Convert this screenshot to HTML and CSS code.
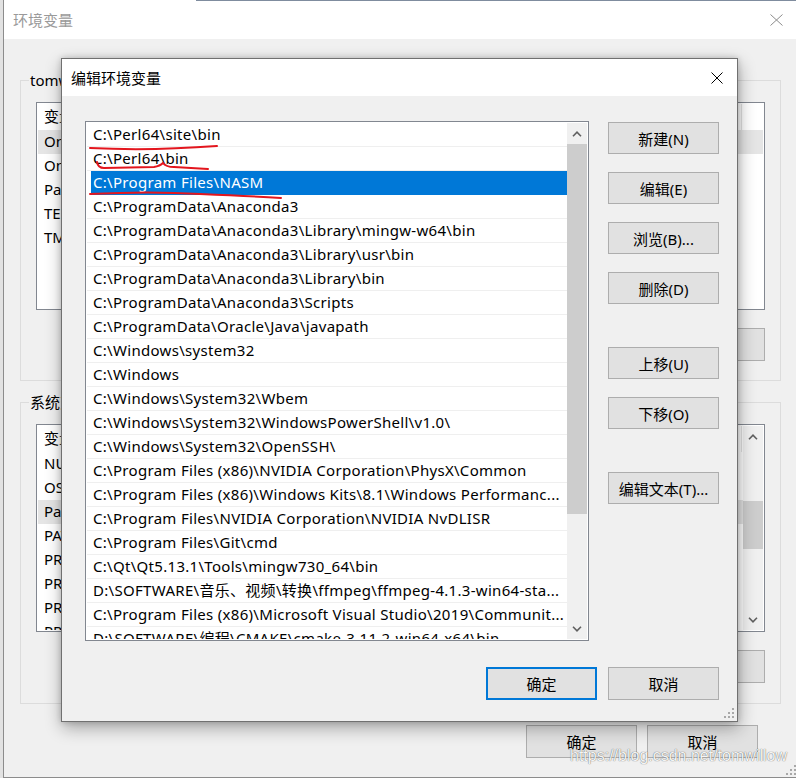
FILE: index.html
```html
<!DOCTYPE html>
<html lang="zh-CN">
<head>
<meta charset="utf-8">
<title>编辑环境变量</title>
<link rel="stylesheet" href="styles.css">
</head>
<body>
<div class="bgwin">
  <div class="bg-title">
    <span class="bg-title-text">环境变量</span>
    <svg class="bg-close" width="13" height="12" viewBox="0 0 13 12"><path d="M0.5 0.5 L12.5 11.5 M12.5 0.5 L0.5 11.5" stroke="#8c8c8c" stroke-width="1" fill="none"/></svg>
  </div>
  <div class="bg-body">
    <div class="group group-user">
      <div class="group-label">tomwillow 的用户变量(U)</div>
      <div class="lv">
        <div class="lv-inner">
          <div class="lv-head"><span class="c1">变量</span><span class="c2">值</span></div>
          <div class="lv-row lv-hl"><span class="c1">OneDrive</span><span class="c2">C:\Users\tomwillow\OneDrive</span></div>
          <div class="lv-row"><span class="c1">OneDriveConsumer</span><span class="c2">C:\Users\tomwillow\OneDrive</span></div>
          <div class="lv-row"><span class="c1">Path</span><span class="c2">C:\Users\tomwillow\AppData\Local\Microsoft\WindowsApps;</span></div>
          <div class="lv-row"><span class="c1">TEMP</span><span class="c2">C:\Users\tomwillow\AppData\Local\Temp</span></div>
          <div class="lv-row"><span class="c1">TMP</span><span class="c2">C:\Users\tomwillow\AppData\Local\Temp</span></div>
        </div>
      </div>
      <div class="btnrow">
        <div class="btn">新建(N)...</div>
        <div class="btn">编辑(E)...</div>
        <div class="btn">删除(D)</div>
      </div>
    </div>
    <div class="group group-sys">
      <div class="group-label">系统变量(S)</div>
      <div class="lv">
        <div class="lv-inner">
          <div class="lv-head"><span class="c1">变量</span><span class="c2">值</span></div>
          <div class="lv-row"><span class="c1">NUMBER_OF_PROCESSORS</span><span class="c2">8</span></div>
          <div class="lv-row"><span class="c1">OS</span><span class="c2">Windows_NT</span></div>
          <div class="lv-row lv-hl"><span class="c1">Path</span><span class="c2">C:\Perl64\site\bin;C:\Perl64\bin;C:\Program Files\NASM;</span></div>
          <div class="lv-row"><span class="c1">PATHEXT</span><span class="c2">.COM;.EXE;.BAT;.CMD;.VBS;.VBE;.JS;.JSE;.WSF;.WSH;.MSC</span></div>
          <div class="lv-row"><span class="c1">PROCESSOR_ARCHITECTURE</span><span class="c2">AMD64</span></div>
          <div class="lv-row"><span class="c1">PROCESSOR_IDENTIFIER</span><span class="c2">Intel64 Family 6 Model 158</span></div>
          <div class="lv-row"><span class="c1">PROCESSOR_LEVEL</span><span class="c2">6</span></div>
          <div class="lv-row"><span class="c1">PROCESSOR_REVISION</span><span class="c2">9e09</span></div>
        </div>
        <div class="vscroll vscroll-bg">
          <div class="sb-btn"><svg width="10" height="6" viewBox="0 0 10 6"><path d="M1 5.2 L5 1.2 L9 5.2" stroke="#606060" stroke-width="1.6" fill="none"/></svg></div>
          <div class="sb-track sb-track-bg"><div class="sb-thumb sb-thumb-bg"></div></div>
          <div class="sb-btn"><svg width="10" height="6" viewBox="0 0 10 6"><path d="M1 0.8 L5 4.8 L9 0.8" stroke="#606060" stroke-width="1.6" fill="none"/></svg></div>
        </div>
      </div>
      <div class="btnrow">
        <div class="btn">新建(W)...</div>
        <div class="btn">编辑(I)...</div>
        <div class="btn">删除(L)</div>
      </div>
    </div>
    <div class="bg-bottom">
      <div class="btn">确定</div>
      <div class="btn">取消</div>
    </div>
  </div>
  <svg class="grip grip-bg" width="10" height="10" viewBox="0 0 10 10"><g fill="#a8a8a8"><rect x="8" y="0" width="2" height="2"/><rect x="4" y="4" width="2" height="2"/><rect x="8" y="4" width="2" height="2"/><rect x="0" y="8" width="2" height="2"/><rect x="4" y="8" width="2" height="2"/><rect x="8" y="8" width="2" height="2"/></g></svg>
</div>

<div class="dialog">
  <div class="dlg-title">
    <span>编辑环境变量</span>
    <svg class="dlg-close" width="12" height="12" viewBox="0 0 12 12"><path d="M0.5 0.5 L11.5 11.5 M11.5 0.5 L0.5 11.5" stroke="#000" stroke-width="1" fill="none"/></svg>
  </div>
  <div class="dlg-body">
    <div class="dlg-main">
      <div class="plist">
        <div class="plist-rows">
          <div class="prow">C:\Perl64\site\bin</div>
          <div class="prow">C:\Perl64\bin</div>
          <div class="prow sel">C:\Program Files\NASM</div>
          <div class="prow">C:\ProgramData\Anaconda3</div>
          <div class="prow">C:\ProgramData\Anaconda3\Library\mingw-w64\bin</div>
          <div class="prow">C:\ProgramData\Anaconda3\Library\usr\bin</div>
          <div class="prow">C:\ProgramData\Anaconda3\Library\bin</div>
          <div class="prow">C:\ProgramData\Anaconda3\Scripts</div>
          <div class="prow">C:\ProgramData\Oracle\Java\javapath</div>
          <div class="prow">C:\Windows\system32</div>
          <div class="prow">C:\Windows</div>
          <div class="prow">C:\Windows\System32\Wbem</div>
          <div class="prow">C:\Windows\System32\WindowsPowerShell\v1.0\</div>
          <div class="prow">C:\Windows\System32\OpenSSH\</div>
          <div class="prow">C:\Program Files (x86)\NVIDIA Corporation\PhysX\Common</div>
          <div class="prow">C:\Program Files (x86)\Windows Kits\8.1\Windows Performanc...</div>
          <div class="prow">C:\Program Files\NVIDIA Corporation\NVIDIA NvDLISR</div>
          <div class="prow">C:\Program Files\Git\cmd</div>
          <div class="prow">C:\Qt\Qt5.13.1\Tools\mingw730_64\bin</div>
          <div class="prow">D:\SOFTWARE\音乐、视频\转换\ffmpeg\ffmpeg-4.1.3-win64-sta...</div>
          <div class="prow">C:\Program Files (x86)\Microsoft Visual Studio\2019\Communit...</div>
          <div class="prow">D:\SOFTWARE\编程\CMAKE\cmake-3.11.2-win64-x64\bin</div>
        </div>
        <div class="vscroll">
          <div class="sb-btn"><svg width="10" height="6" viewBox="0 0 10 6"><path d="M1 5.2 L5 1.2 L9 5.2" stroke="#606060" stroke-width="1.6" fill="none"/></svg></div>
          <div class="sb-track"><div class="sb-thumb"></div></div>
          <div class="sb-btn"><svg width="10" height="6" viewBox="0 0 10 6"><path d="M1 0.8 L5 4.8 L9 0.8" stroke="#606060" stroke-width="1.6" fill="none"/></svg></div>
        </div>
      </div>
      <div class="btncol">
        <div class="btn">新建(N)</div>
        <div class="btn">编辑(E)</div>
        <div class="btn">浏览(B)...</div>
        <div class="btn">删除(D)</div>
        <div class="btn btn-gap">上移(U)</div>
        <div class="btn">下移(O)</div>
        <div class="btn btn-gap">编辑文本(T)...</div>
      </div>
    </div>
    <div class="dlg-bottom">
      <div class="btn btn-default">确定</div>
      <div class="btn">取消</div>
    </div>
  </div>
  <svg class="grip grip-dlg" width="10" height="10" viewBox="0 0 10 10"><g fill="#a8a8a8"><rect x="8" y="0" width="2" height="2"/><rect x="4" y="4" width="2" height="2"/><rect x="8" y="4" width="2" height="2"/><rect x="0" y="8" width="2" height="2"/><rect x="4" y="8" width="2" height="2"/><rect x="8" y="8" width="2" height="2"/></g></svg>
</div>

<svg class="marks" width="796" height="778" viewBox="0 0 796 778">
  <g stroke="#e3161e" stroke-width="2" fill="none" stroke-linecap="round">
    <path d="M90 148 Q150 151 217 146"/>
    <path d="M97 162 Q98 168 104 168 L154 167 Q160 166 163 163 Q166 167 174 167 L208 169"/>
    <path d="M90 194 Q150 191 200 194 Q250 196 281 198"/>
  </g>
</svg>

<div class="watermark">https://blog.csdn.net/tomwillow</div>
</body>
</html>
```

FILE: styles.css
```css
* { box-sizing: border-box; }
html, body { margin: 0; padding: 0; }
body {
  width: 796px;
  height: 778px;
  overflow: hidden;
  position: relative;
  background: #e2e2e2;
  font-family: "Noto Sans", "Noto Sans CJK SC", sans-serif;
  font-size: 15px;
  color: #000;
}

/* background window */
.bgwin {
  position: absolute;
  left: 3px;
  top: 0;
  width: 796px;
  height: 778px;
  border-left: 1px solid #8c8c8c;
  border-bottom: 1px solid #8c8c8c;
  background: #f0f0f0;
  display: flex;
  flex-direction: column;
}
.bg-title {
  position: relative;
  height: 39px;
  flex: none;
  background: #fff;
  display: flex;
  align-items: center;
  justify-content: space-between;
  padding: 0 16px 0 9px;
  color: #9a9a9a;
}
.bg-title::before {
  content: "";
  position: absolute;
  left: 192px;
  right: 0;
  top: 0;
  height: 1px;
  background: #7f8c9e;
}
.bg-body {
  flex: 1;
  padding: 41px 0 0 16px;
}
.group {
  width: 761px;
  border: 1px solid #dcdcdc;
  padding: 0 15px;
}
.group-user { height: 301px; }
.group-sys { height: 302px; margin-top: 21px; }
.group-label {
  margin: -11px 0 0 -7px;
  height: 20px;
  line-height: 20px;
  width: fit-content;
  padding: 0 1px;
  background: #f0f0f0;
  white-space: nowrap;
}
.lv {
  margin-top: 12px;
  height: 208px;
  border: 1px solid #828790;
  background: #fff;
  padding: 1px;
  display: flex;
  overflow: hidden;
}
.lv-inner { flex: 1; overflow: hidden; }
.lv-head {
  height: 26px;
  line-height: 25px;
  display: flex;
  white-space: nowrap;
}
.lv-head .c1 { border-right: 1px solid #e5e5e5; }
.lv-head .c2 { border-right: 1px solid #e5e5e5; }
.lv-row {
  height: 24px;
  line-height: 23px;
  display: flex;
  white-space: nowrap;
}
.lv-hl { background: #e5e5e5; }
.c1 { width: 185px; padding-left: 6px; overflow: hidden; flex: none; }
.c2 { width: 519px; padding-left: 6px; overflow: hidden; flex: none; }
.btnrow {
  display: flex;
  justify-content: flex-end;
  gap: 10px;
  margin-top: 18px;
}
.btnrow .btn { height: 33px; }
.bg-bottom {
  width: 761px;
  display: flex;
  justify-content: flex-end;
  gap: 10px;
  margin-top: 21px;
  padding-right: 23px;
}
.bg-bottom .btn { height: 33px; }

.btn {
  width: 111px;
  height: 32px;
  flex: none;
  background: #e1e1e1;
  border: 1px solid #adadad;
  display: flex;
  align-items: center;
  justify-content: center;
  white-space: nowrap;
}

/* scrollbars */
.vscroll {
  width: 20px;
  flex: none;
  display: flex;
  flex-direction: column;
  background: #f0f0f0;
}
.sb-btn {
  height: 21px;
  flex: none;
  display: flex;
  align-items: center;
  justify-content: center;
}
.sb-track { flex: 1; }
.sb-thumb { height: 370px; background: #cdcdcd; }
.sb-track-bg { padding-top: 54px; }
.sb-thumb-bg { height: 48px; }

/* dialog */
.dialog {
  position: absolute;
  left: 61px;
  top: 58px;
  width: 677px;
  height: 664px;
  border: 1px solid #707070;
  background: #f0f0f0;
  display: flex;
  flex-direction: column;
  box-shadow: 1px 6px 16px rgba(0,0,0,0.32), 0 0 6px rgba(0,0,0,0.18);
}
.dlg-title {
  height: 37px;
  flex: none;
  background: #fff;
  display: flex;
  align-items: center;
  justify-content: space-between;
  padding: 0 14px 0 9px;
}
.dlg-body {
  flex: 1;
  padding: 25px 18px 0 23px;
  display: flex;
  flex-direction: column;
}
.dlg-main { display: flex; gap: 19px; }
.plist {
  width: 504px;
  height: 520px;
  border: 1px solid #828790;
  background: #fff;
  padding: 1px;
  display: flex;
}
.plist-rows { flex: 1; overflow: hidden; }
.prow {
  height: 24px;
  line-height: 23px;
  border-bottom: 1px solid #efefef;
  padding: 0 6px;
  white-space: nowrap;
  overflow: hidden;
  letter-spacing: 0.3px;
}
.prow.sel {
  color: #fff;
  border-bottom-color: transparent;
  background: linear-gradient(to right, transparent 4px, #0078d7 4px);
}
.btncol {
  width: 111px;
  padding-top: 1px;
  display: flex;
  flex-direction: column;
  gap: 18px;
}
.btncol .btn-gap { margin-top: 25px; }
.dlg-bottom {
  display: flex;
  justify-content: flex-end;
  gap: 11px;
  margin-top: 26px;
}
.dlg-bottom .btn { height: 33px; }
.btn-default { border: 2px solid #0078d7; }

.grip { position: absolute; }
.grip-dlg { right: 3px; bottom: 3px; }
.grip-bg { right: 3px; bottom: 2px; }

.marks {
  position: absolute;
  left: 0;
  top: 0;
  pointer-events: none;
}
.watermark {
  position: absolute;
  left: 570px;
  top: 747px;
  font-family: "Liberation Sans", sans-serif;
  font-size: 16px;
  color: rgba(255,255,255,0.95);
  text-shadow: 0 0 1px rgba(0,0,0,0.5), 0 0 1px rgba(0,0,0,0.3);
  white-space: nowrap;
}
```
